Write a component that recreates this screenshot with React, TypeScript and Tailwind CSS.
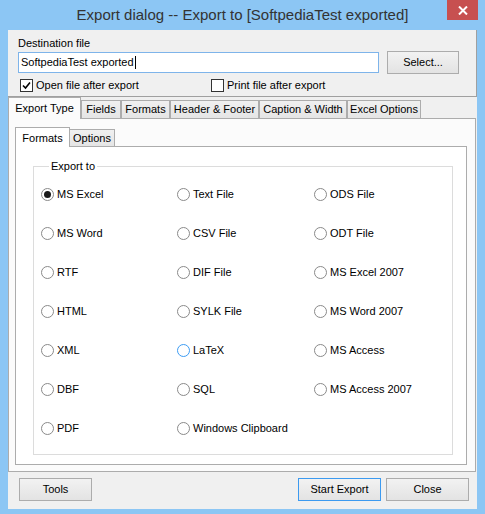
import clsx from 'clsx';

const font = { fontFamily: '"Liberation Sans", Arial, sans-serif' };

function CheckBox({ label, checked }: { label: string; checked?: boolean }) {
  return (
    <div className="flex items-center gap-[3px]">
      <span className="flex h-[13px] w-[13px] items-center justify-center border border-[#333] bg-white">
        {checked && (
          <svg width="9" height="9" viewBox="0 0 9 9">
            <path d="M1 4.5 L3.5 7 L8 1.5" fill="none" stroke="#000" strokeWidth="1.6" />
          </svg>
        )}
      </span>
      <span>{label}</span>
    </div>
  );
}

function Radio({ label, checked, hot }: { label: string; checked?: boolean; hot?: boolean }) {
  return (
    <div className="flex items-center gap-[3px]">
      <span
        className={clsx(
          'flex h-[13px] w-[13px] items-center justify-center rounded-full border bg-white',
          hot ? 'border-[#3d9cf3]' : 'border-[#8a8a8a]'
        )}
      >
        {checked && <span className="h-[7px] w-[7px] rounded-full bg-[#1a1a1a]" />}
      </span>
      <span>{label}</span>
    </div>
  );
}

function Button({ label, width, focused }: { label: string; width: string; focused?: boolean }) {
  return (
    <div
      className={clsx(
        'flex h-[23px] items-center justify-center border bg-gradient-to-b from-[#f2f2f2] to-[#e3e3e3]',
        width,
        focused ? 'border-[#3c9af0]' : 'border-[#acacac]'
      )}
    >
      {label}
    </div>
  );
}

function Tab({ label, width }: { label: string; width: string }) {
  return (
    <div
      className={clsx(
        'flex h-[18px] items-center justify-center border border-b-0 border-[#acacac] bg-gradient-to-b from-[#f0f0f0] to-[#e5e5e5]',
        width
      )}
    >
      {label}
    </div>
  );
}

const rows: [string, string | null, string | null][] = [
  ['MS Excel', 'Text File', 'ODS File'],
  ['MS Word', 'CSV File', 'ODT File'],
  ['RTF', 'DIF File', 'MS Excel 2007'],
  ['HTML', 'SYLK File', 'MS Word 2007'],
  ['XML', 'LaTeX', 'MS Access'],
  ['DBF', 'SQL', 'MS Access 2007'],
  ['PDF', 'Windows Clipboard', null],
];

export default function App() {
  return (
    <div className="flex h-[514px] w-[485px] flex-col bg-[#8cc6f4] text-[11px] text-black" style={font}>
      {/* title bar */}
      <div className="relative flex h-[30px] items-center justify-center">
        <span className="text-[15px] text-[#333]">Export dialog -- Export to [SoftpediaTest exported]</span>
        <div className="absolute right-[7px] top-0 flex h-[20px] w-[31px] items-center justify-center bg-[#c75050]">
          <svg width="10" height="9" viewBox="0 0 10 9">
            <path d="M1 0.5 L9 8.5 M9 0.5 L1 8.5" stroke="#fff" strokeWidth="2" />
          </svg>
        </div>
      </div>

      {/* client */}
      <div className="mx-[8px] flex h-[479px] w-[469px] flex-col bg-[#f0f0f0]">
        <div className="h-[67px] border-b border-r border-[#a0a0a0] pl-[10px] pt-[6px]">
          <div className="h-[14px] leading-[14px]">Destination file</div>
          <div className="mt-[1px] flex items-center">
            <div className="flex h-[21px] w-[361px] items-center border border-[#7eb4ea] bg-white pl-[2px]">
              SoftpediaTest exported<span className="ml-[1px] h-[13px] w-[1px] bg-black" />
            </div>
            <div className="ml-[8px]">
              <Button label="Select..." width="w-[72px]" />
            </div>
          </div>
          <div className="mt-[3px] flex pl-[2px]">
            <div className="w-[191px]">
              <CheckBox label="Open file after export" checked />
            </div>
            <CheckBox label="Print file after export" />
          </div>
        </div>

        {/* main tabs */}
        <div className="flex h-[21px] items-end">
          <div className="relative z-10 mb-[-1px] flex h-[22px] w-[73px] items-start justify-center border border-b-0 border-[#acacac] bg-[#fbfbfb] pt-[2px]">
            Export Type
          </div>
          <Tab label="Fields" width="w-[40px]" />
          <Tab label="Formats" width="w-[49px]" />
          <Tab label="Header & Footer" width="w-[89px]" />
          <Tab label="Caption & Width" width="w-[88px]" />
          <Tab label="Excel Options" width="w-[74px]" />
        </div>

        <div className="h-[354px] w-[468px] border border-[#acacac] bg-[#fbfbfb] pl-[6px] pt-[8px]">
          {/* inner tabs */}
          <div className="flex h-[19px] items-end">
            <div className="relative z-10 mb-[-1px] flex h-[20px] w-[55px] items-start justify-center border border-b-0 border-[#acacac] bg-white pt-[2px]">
              Formats
            </div>
            <div className="flex h-[17px] w-[45px] items-center justify-center border border-b-0 border-l-0 border-[#acacac] bg-gradient-to-b from-[#f0f0f0] to-[#e5e5e5]">
              Options
            </div>
          </div>
          <div className="h-[319px] w-[452px] border border-[#acacac] bg-white pl-[17px] pt-[13px]">
            <fieldset className="h-[295px] w-[420px] border border-[#dcdcdc] pl-[7px] pt-[2px]">
              <legend className="ml-[8px] px-[2px] leading-[13px]">Export to</legend>
              <div className="grid grid-cols-[136px_137px_1fr]">
                {rows.map((r, i) =>
                  r.map((label, j) => (
                    <div key={`${i}-${j}`} className="flex h-[39px] items-center">
                      {label && <Radio label={label} checked={label === 'MS Excel'} hot={label === 'LaTeX'} />}
                    </div>
                  ))
                )}
              </div>
            </fieldset>
          </div>
        </div>

        {/* buttons */}
        <div className="mt-[6px] flex pl-[11px]">
          <Button label="Tools" width="w-[73px]" />
          <div className="ml-[206px]">
            <Button label="Start Export" width="w-[83px]" focused />
          </div>
          <div className="ml-[5px]">
            <Button label="Close" width="w-[83px]" />
          </div>
        </div>
      </div>
    </div>
  );
}
